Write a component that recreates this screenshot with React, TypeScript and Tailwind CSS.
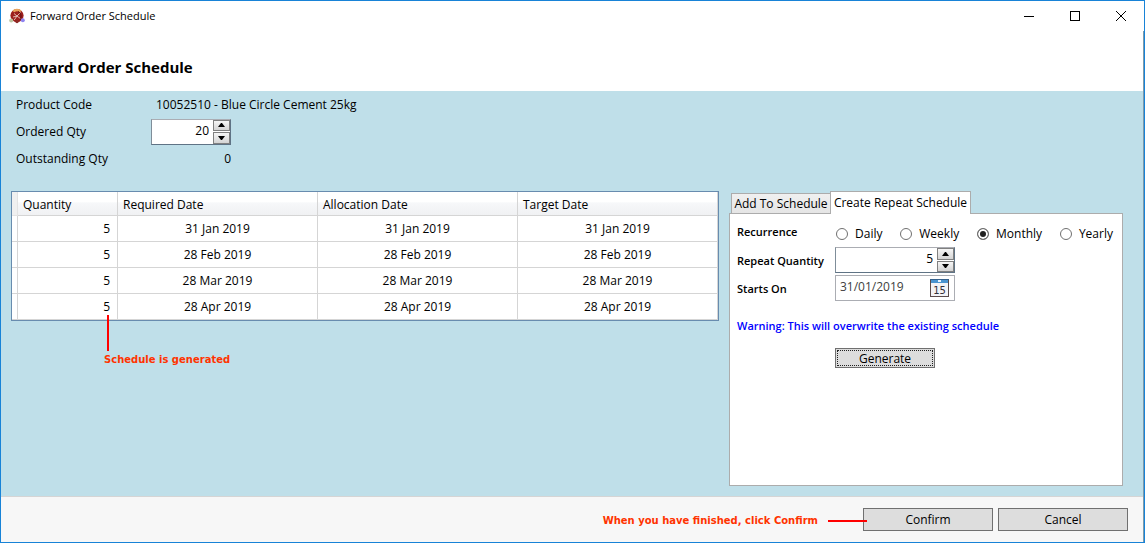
import { useState, type ReactNode } from 'react';

const rows = ['31 Jan 2019', '28 Feb 2019', '28 Mar 2019', '28 Apr 2019'];
const recurrences = ['Daily', 'Weekly', 'Monthly', 'Yearly'];

function AppIcon() {
  return (
    <svg className="h-4 w-4 shrink-0" viewBox="0 0 16 16" aria-hidden="true">
      <circle cx="8" cy="7.600" r="6.600" fill="#9c1f1c" />
      <path d="M3.600 3.200C5 .2 10.600 0 12.500 3.200L10.500 4.200C9 3 7 3 5.600 4.200Z" fill="#e8a45c" />
      <path d="M5 5.500L8 8L11.500 4.500M8 8L5.200 12M8 8L12 11M4 9L8 8" stroke="#e9c6bd" strokeWidth=".9" fill="none" />
      <path d="M9 3.500C12 5 13 8 11 12" stroke="#5c0c10" strokeWidth="1" fill="none" />
      <circle cx="2.200" cy="12.400" r="2" fill="#bcc4a0" />
      <circle cx="8" cy="13.600" r="1.700" fill="#8b2a26" />
      <circle cx="13.800" cy="12.200" r="2" fill="#8f84f0" />
    </svg>
  );
}

function CalendarIcon() {
  return (
    <svg className="h-[18px] w-[19px]" viewBox="0 0 19 18" aria-hidden="true">
      <rect x="0.5" y="0.5" width="18" height="17" fill="#f3f3f6" stroke="#5a4b4b" />
      <rect x="1" y="0" width="17" height="4" fill="#4a94d0" />
      <rect x="0" y="0" width="19" height="1" fill="#35618c" />
      <rect x="8" y="1" width="3" height="2" fill="#e8f4ff" />
      <text x="9.5" y="14.500" textAnchor="middle" fontSize="10" fontFamily="DejaVu Sans, sans-serif" fill="#33303a">15</text>
    </svg>
  );
}

function StepButton({ up, label, onClick }: { up?: boolean; label: string; onClick: () => void }) {
  return (
    <button
      type="button"
      aria-label={label}
      onClick={onClick}
      className="flex flex-1 items-center justify-center border border-[#808080] bg-linear-to-b from-[#f6f6f6] to-[#d4d4d4]"
    >
      <svg className="h-[4px] w-[7px]" viewBox="0 0 7 4" aria-hidden="true">
        <path d={up ? 'M3 0H4L7 4H0Z' : 'M0 0H7L4 4H3Z'} fill="#000" />
      </svg>
    </button>
  );
}

function Spinner({ id, initial, width }: { id: string; initial: number; width: string }) {
  const [value, setValue] = useState(initial);
  return (
    <div className={`flex h-[26px] border border-t-[#abadb3] border-r-[#5f7385] border-b-[#5f7385] border-l-[#7f8d99] bg-white ${width}`}>
      <input
        id={id}
        value={value}
        onChange={(e) => setValue(Number(e.target.value) || 0)}
        className="min-w-0 flex-1 bg-transparent pr-1 pb-0.5 text-right outline-none"
      />
      <div className="flex w-[17px] flex-col gap-px">
        <StepButton up label="Increase" onClick={() => setValue(value + 1)} />
        <StepButton label="Decrease" onClick={() => setValue(Math.max(0, value - 1))} />
      </div>
    </div>
  );
}

function FooterButton({ children }: { children: ReactNode }) {
  return (
    <button type="button" className="h-[23px] w-[130px] border border-[#707070] bg-[#dddddd]">
      {children}
    </button>
  );
}

function ScheduleTable() {
  const head = 'border-r border-b border-[#d5d5d5] bg-linear-to-b from-white from-45% via-[#f7f8fa] via-46% to-[#f0f1f3] px-[5px] pt-[2px] pb-0 text-left font-normal';
  return (
    <div className="relative min-w-0 flex-1 self-start border border-[#688caf] bg-white">
      <table className="w-full table-fixed border-separate border-spacing-0">
        <colgroup>
          <col className="w-[6px]" />
          <col className="w-[100px]" />
          <col />
          <col />
          <col />
        </colgroup>
        <thead>
          <tr className="h-6">
            <td className="border-r border-b border-[#e3e3e3] bg-[#f0f0f0] p-0" />
            <th className={head}>Quantity</th>
            <th className={head}>Required Date</th>
            <th className={head}>Allocation Date</th>
            <th className={head}>Target Date</th>
          </tr>
        </thead>
        <tbody>
          {rows.map((date) => (
            <tr key={date} className="h-[26px]">
              <td className="border-r border-b border-[#d5d5d5] p-0" />
              <td className="border-r border-b border-[#d5d5d5] py-0 pr-[7px] text-right">5</td>
              {[0, 1, 2].map((i) => (
                <td key={i} className="border-r border-b border-[#d5d5d5] p-0 text-center">
                  {date}
                </td>
              ))}
            </tr>
          ))}
        </tbody>
      </table>
      <div className="absolute top-[123px] left-[92px]">
        <div className="ml-[3px] h-9 w-[2px] bg-[#ff0000]" />
        <p className="font-['DejaVu_Sans',sans-serif] text-[10px] leading-[18px] font-bold whitespace-nowrap text-[#ff3300]">
          Schedule is generated
        </p>
      </div>
    </div>
  );
}

function RepeatPanel() {
  const [choice, setChoice] = useState('Monthly');
  return (
    <section className="flex w-[394px] shrink-0 flex-col">
      <div role="tablist" className="flex h-[22px] items-end pl-[2px]">
        <button type="button" role="tab" aria-selected="false" className="h-5 w-[99px] border border-r-0 border-b-0 border-[#acacac] bg-linear-to-b from-[#f0f0f0] to-[#e5e5e5] whitespace-nowrap">
          Add To Schedule
        </button>
        <button type="button" role="tab" aria-selected="true" className="z-10 -mb-px h-[23px] w-[141px] border border-b-0 border-[#acacac] bg-white whitespace-nowrap">
          Create Repeat Schedule
        </button>
      </div>
      <div className="flex-1 border border-[#acacac] bg-white px-[7px] pt-1">
        <div className="grid grid-cols-[98px_1fr] auto-rows-[28px] items-center">
          <span id="recurrence" className="text-[11px] font-semibold">Recurrence</span>
          <div role="radiogroup" aria-labelledby="recurrence" className="flex justify-between pt-[3px] pr-0.5 pl-px">
            {recurrences.map((r) => (
              <label key={r} className="flex items-center gap-[7px]">
                <input
                  type="radio"
                  name="recurrence"
                  checked={choice === r}
                  onChange={() => setChoice(r)}
                  className="h-3 w-3 appearance-none rounded-full border border-[#707070] bg-white checked:bg-[#212121] checked:shadow-[inset_0_0_0_2px_white]"
                />
                {r}
              </label>
            ))}
          </div>
          <label htmlFor="repeat" className="pt-0.5 text-[11px] font-semibold whitespace-nowrap">Repeat Quantity</label>
          <Spinner id="repeat" initial={5} width="w-[120px]" />
          <label htmlFor="starts" className="pt-0.5 text-[11px] font-semibold">Starts On</label>
          <div className="flex h-[26px] w-[120px] items-center border border-[#abadb3] bg-white pr-[5px]">
            <input id="starts" defaultValue="31/01/2019" className="min-w-0 flex-1 bg-transparent pb-0.5 pl-1 text-[#404040] outline-none" />
            <button type="button" aria-label="Open calendar">
              <CalendarIcon />
            </button>
          </div>
        </div>
        <p className="mt-[10px] text-[11px] leading-7 font-semibold text-[#0000ff]">
          Warning: This will overwrite the existing schedule
        </p>
        <button type="button" className="mt-2 ml-[98px] flex h-5 w-[100px] border border-[#707070] bg-[#dddddd] p-px">
          <span className="flex h-full w-full items-center justify-center border border-dotted border-[#202020] pt-0.5">Generate</span>
        </button>
      </div>
    </section>
  );
}

export default function App() {
  return (
    <div className="flex min-h-screen flex-col border border-[#1883d7] bg-white font-['Open_Sans',sans-serif] text-[12px] leading-4 text-black">
      <div className="flex h-[30px] items-center pl-2">
        <AppIcon />
        <span className="ml-[5px] flex-1 text-[11px]">Forward Order Schedule</span>
        <button type="button" aria-label="Minimize" className="flex h-full w-[46px] items-center justify-center">
          <svg className="h-[10px] w-[10px]" viewBox="0 0 10 10"><path d="M0 5.500H10" stroke="#000" /></svg>
        </button>
        <button type="button" aria-label="Maximize" className="flex h-full w-[46px] items-center justify-center">
          <svg className="h-[10px] w-[10px]" viewBox="0 0 10 10"><rect x=".5" y=".5" width="9" height="9" fill="none" stroke="#000" /></svg>
        </button>
        <button type="button" aria-label="Close" className="flex h-full w-[46px] items-center justify-center">
          <svg className="h-[10px] w-[10px]" viewBox="0 0 10 10"><path d="M0 0L10 10M10 0L0 10" stroke="#000" /></svg>
        </button>
      </div>
      <div className="flex flex-1 flex-col border-r border-[#7d9aab]">
        <header className="flex h-[60px] items-center pt-3 pl-[10px]">
          <h1 className="text-[15px] font-bold">Forward Order Schedule</h1>
        </header>
        <main className="flex flex-1 flex-col bg-[#bfdfe9] pr-5 pb-[10px] pl-[10px]">
          <div className="grid grid-cols-[135px_80px_1fr] auto-rows-[27px] items-center pl-[5px]">
            <span>Product Code</span>
            <span className="col-span-2 pl-[5px]">10052510 - Blue Circle Cement 25kg</span>
            <label htmlFor="ordered">Ordered Qty</label>
            <Spinner id="ordered" initial={20} width="w-[80px]" />
            <span />
            <span>Outstanding Qty</span>
            <span className="text-right">0</span>
          </div>
          <div className="mt-[19px] flex flex-1 gap-[10px]">
            <ScheduleTable />
            <RepeatPanel />
          </div>
        </main>
        <footer className="flex h-[46px] items-center justify-end border-t border-[#d5d5d5] bg-[#f7f7f7] pr-[15px]">
          <p className="pt-[2px] font-['DejaVu_Sans',sans-serif] text-[10px] font-bold whitespace-nowrap text-[#ff3300]">
            When you have finished, click Confirm
          </p>
          <div className="z-10 mt-[3px] -mr-1 ml-[10px] h-[2px] w-[39px] bg-[#ff0000]" />
          <div className="flex gap-[5px]">
            <FooterButton>Confirm</FooterButton>
            <FooterButton>Cancel</FooterButton>
          </div>
        </footer>
      </div>
    </div>
  );
}
